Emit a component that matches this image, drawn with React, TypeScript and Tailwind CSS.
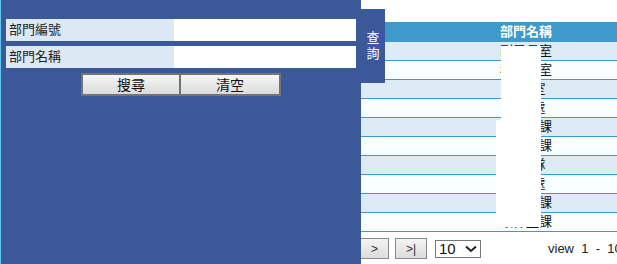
import React from "react";

const rows = [
  "副局長室",
  "秘書長室",
  "秘書室",
  "人事處",
  "人文政課",
  "社活動課",
  "消防隊",
  "督導處",
  "工商業課",
  "環保監課",
];

const font = { fontFamily: '"Liberation Sans", "Noto Sans CJK TC", sans-serif' };

function SearchPanel() {
  return (
    <div className="relative w-[361px] h-[264px] shrink-0 bg-[#3b5998] border-l border-[#5ec8f0] z-10">
      <div className="pt-[19px] pl-[5px] pr-[5px] flex flex-col gap-[5px]">
        <div className="flex h-[22px]">
          <div className="w-[168px] bg-[#dce9f4] text-[13px] text-[#222] pl-[3px] leading-[22px]">部門編號</div>
          <div className="flex-1 bg-white" />
        </div>
        <div className="flex h-[22px]">
          <div className="w-[168px] bg-[#dce9f4] text-[13px] text-[#222] pl-[3px] leading-[22px]">部門名稱</div>
          <div className="flex-1 bg-white" />
        </div>
        <div className="flex justify-center">
          <button className="w-[100px] h-[23px] border-2 border-[#737373] bg-gradient-to-b from-[#f7f7f7] to-[#dadada] text-[14px] text-[#111] leading-none">
            搜尋
          </button>
          <button className="w-[100px] h-[23px] border-2 border-l-0 border-[#737373] bg-gradient-to-b from-[#f7f7f7] to-[#dadada] text-[14px] text-[#111] leading-none">
            清空
          </button>
        </div>
      </div>
      <div className="absolute left-[360px] top-[9px] w-[24px] h-[74px] bg-[#3b5998] flex flex-col items-center justify-center text-white text-[13px] leading-[16px]">
        <span>查</span>
        <span>詢</span>
      </div>
    </div>
  );
}

function DeptTable() {
  return (
    <div className="relative w-[330px] shrink-0">
      <div className="h-[22px] bg-white" />
      <div className="h-[20px] bg-[#3e9acb] text-white text-[13px] font-bold text-center leading-[20px]">部門名稱</div>
      {rows.map((name, i) => (
        <div
          key={i}
          className={`h-[19px] border-b border-[#3b9bd0] text-[13px] text-[#111] text-center leading-[18px] ${
            i % 2 === 0 ? "bg-[#dcebf5]" : "bg-[#f8feff]"
          }`}
        >
          {name}
        </div>
      ))}
      <div className="flex items-center h-[32px] pt-[1px]">
        <button className="w-[28px] h-[21px] border border-l-0 border-[#8a8a8a] bg-gradient-to-b from-[#f4f4f4] to-[#dcdcdc] text-[12px] text-[#333]">
          &gt;
        </button>
        <button className="ml-[6px] w-[32px] h-[21px] border border-[#8a8a8a] bg-gradient-to-b from-[#f4f4f4] to-[#dcdcdc] text-[12px] text-[#333]">
          &gt;|
        </button>
        <div className="ml-[8px] w-[46px] h-[18px] border border-[#777] bg-white flex items-center justify-between px-[3px] text-[15px] text-[#111]">
          <span className="leading-none">10</span>
          <svg width="12" height="8" viewBox="0 0 12 8">
            <path d="M1 1.5 L6 6 L11 1.5" fill="none" stroke="#222" strokeWidth="2" />
          </svg>
        </div>
        <div className="ml-[67px] text-[13px] text-[#222] whitespace-nowrap">view&nbsp; 1&nbsp; -&nbsp; 10</div>
      </div>
      <div className="absolute left-[140px] top-[46px] w-[40px] h-[74px] bg-white" />
      <div className="absolute left-[135px] top-[120px] w-[45px] h-[107px] bg-white" />
    </div>
  );
}

export default function App() {
  return (
    <div className="w-[617px] h-[264px] overflow-hidden bg-white flex" style={font}>
      <SearchPanel />
      <DeptTable />
    </div>
  );
}
